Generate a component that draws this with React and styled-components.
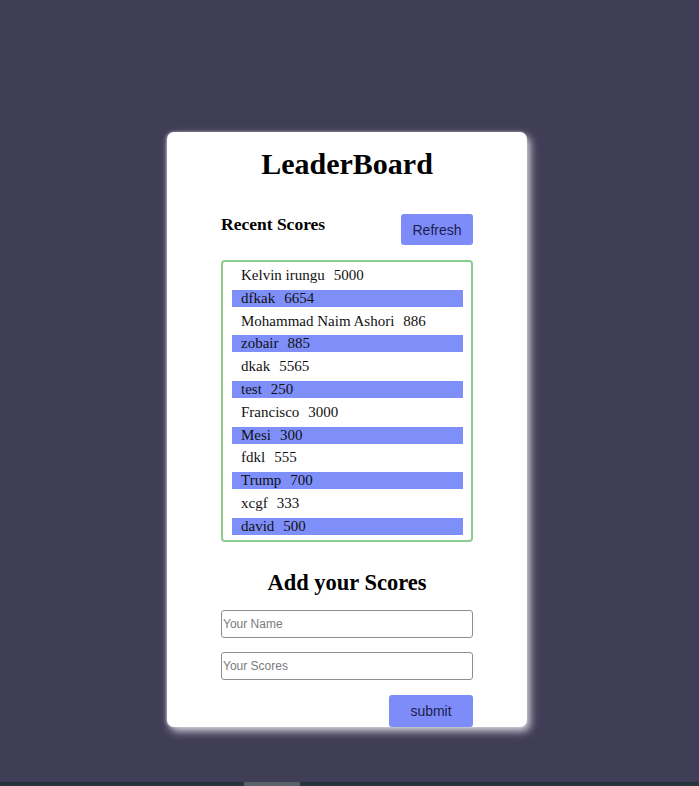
import React from "react";
import styled, { createGlobalStyle } from "styled-components";

const Global = createGlobalStyle`
  html, body { margin: 0; padding: 0; }
  body {
    background: #403d56;
    font-family: "Liberation Serif", "Times New Roman", serif;
    font-size: 15px;
  }
`;

const Page = styled.div`
  height: 786px;
  display: flex;
  flex-direction: column;
`;

const Main = styled.main`
  flex: 1;
  display: flex;
  justify-content: center;
  align-items: flex-start;
  padding-top: 132px;
  padding-right: 5px;
`;

const Card = styled.section`
  width: 252px;
  padding: 15px 54px 0;
  background: #fff;
  border-radius: 7px;
  box-shadow: 3px 4px 9px rgba(225, 225, 235, 0.95), -1px 0 3px rgba(210, 210, 225, 0.6);
  display: flex;
  flex-direction: column;
`;

const Title = styled.h1`
  margin: 0;
  font-size: 30px;
  line-height: 34px;
  font-weight: bold;
  text-align: center;
  color: #000;
`;

const HeaderRow = styled.div`
  margin-top: 33px;
  display: flex;
  justify-content: space-between;
  align-items: flex-start;
`;

const SubTitle = styled.h3`
  margin: 0;
  font-size: 17.5px;
  line-height: 20px;
  font-weight: bold;
  color: #000;
`;

const Button = styled.button`
  border: none;
  border-radius: 3px;
  background: #7d8cf9;
  color: #1b1c4c;
  font-family: "Liberation Sans", Arial, sans-serif;
  font-size: 14px;
  width: ${(p) => p.$w}px;
  height: ${(p) => p.$h}px;
  padding: 0;
  cursor: pointer;
`;

const ScoreList = styled.ul`
  list-style: none;
  margin: 15px 0 0;
  padding: 5px 8px 5px 9px;
  border: 2px solid #8dcb8e;
  border-radius: 4px;
  display: flex;
  flex-direction: column;
  gap: 5.8px;
`;

const ScoreRow = styled.li`
  height: 17px;
  line-height: 17px;
  padding-left: 9px;
  font-size: 15px;
  color: #111;
  background: ${(p) => (p.$striped ? "#7f8ff9" : "transparent")};
  display: flex;
  gap: 9px;
  white-space: nowrap;
`;

const FormTitle = styled.h2`
  margin: 27px 0 0;
  font-size: 22.5px;
  line-height: 28px;
  font-weight: bold;
  text-align: center;
  color: #000;
`;

const Form = styled.form`
  margin-top: 13px;
  display: flex;
  flex-direction: column;
  gap: 14px;
`;

const Input = styled.input`
  box-sizing: border-box;
  width: 252px;
  height: 28px;
  border: 1px solid #8e8e8e;
  border-radius: 3px;
  padding: 1px 1px;
  font-family: "Liberation Sans", Arial, sans-serif;
  font-size: 12px;
  &::placeholder { color: #7b7b7b; }
`;

const SubmitRow = styled.div`
  display: flex;
  justify-content: flex-end;
  margin-top: 1px;
`;

const BottomStrip = styled.div`
  height: 4px;
  background: #28343d;
  display: flex;
`;

const StripThumb = styled.div`
  margin-left: 244px;
  width: 56px;
  background: #5b6169;
`;

const scores = [
  ["Kelvin irungu", 5000],
  ["dfkak", 6654],
  ["Mohammad Naim Ashori", 886],
  ["zobair", 885],
  ["dkak", 5565],
  ["test", 250],
  ["Francisco", 3000],
  ["Mesi", 300],
  ["fdkl", 555],
  ["Trump", 700],
  ["xcgf", 333],
  ["david", 500],
];

export default function App() {
  return (
    <Page>
      <Global />
      <Main>
        <Card>
          <Title>LeaderBoard</Title>
          <HeaderRow>
            <SubTitle>Recent Scores</SubTitle>
            <Button type="button" $w={72} $h={31}>Refresh</Button>
          </HeaderRow>
          <ScoreList>
            {scores.map(([name, score], i) => (
              <ScoreRow key={i} $striped={i % 2 === 1}>
                <span>{name}</span>
                <span>{score}</span>
              </ScoreRow>
            ))}
          </ScoreList>
          <FormTitle>Add your Scores</FormTitle>
          <Form onSubmit={(e) => e.preventDefault()}>
            <Input placeholder="Your Name" />
            <Input placeholder="Your Scores" />
            <SubmitRow>
              <Button type="submit" $w={84} $h={32}>submit</Button>
            </SubmitRow>
          </Form>
        </Card>
      </Main>
      <BottomStrip>
        <StripThumb />
      </BottomStrip>
    </Page>
  );
}
